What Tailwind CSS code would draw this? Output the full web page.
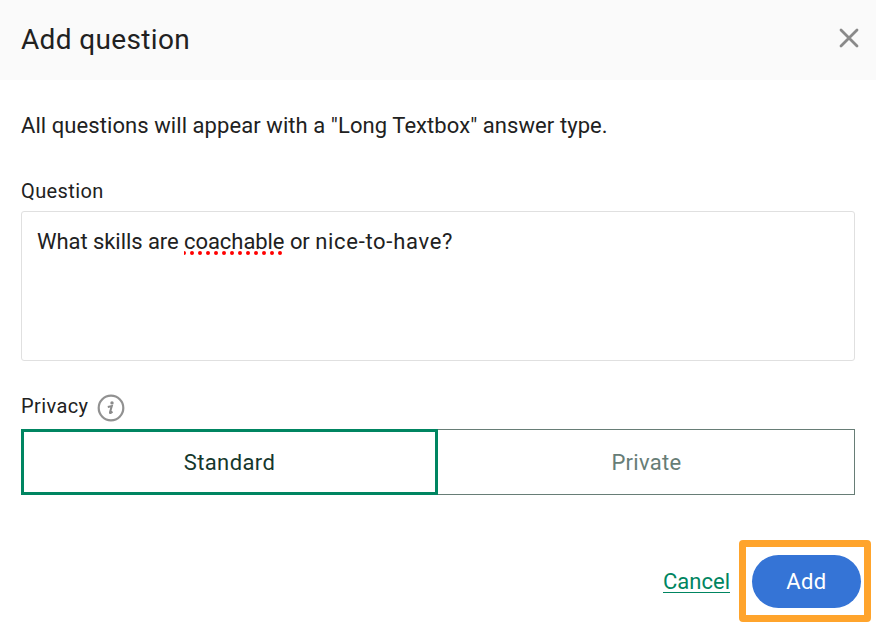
<!DOCTYPE html>
<html lang="en">
  <head>
    <meta charset="utf-8" />
    <meta name="viewport" content="width=device-width, initial-scale=1" />
    <title>Add question</title>
    <script src="https://cdn.jsdelivr.net/npm/@tailwindcss/browser@4"></script>
  </head>
  <body class="bg-white font-['Roboto','Liberation_Sans',sans-serif] text-[#212121]">
    <div class="flex h-[623px] w-[876px] flex-col overflow-hidden">
      <header class="flex h-20 shrink-0 items-center justify-between bg-[#fafafa] pr-[17px] pl-[21px]">
        <h1 class="text-[28px] leading-8 tracking-[0.35px]">Add question</h1>
        <button class="-mt-1" aria-label="Close">
          <svg class="size-5" viewBox="0 0 20 20" fill="none" stroke="#8a8a8a" stroke-width="2.8" stroke-linecap="round">
            <path d="M2 2l16 16M18 2L2 18" />
          </svg>
        </button>
      </header>

      <main class="flex flex-col px-[21px] pt-8">
        <p class="text-[22px] leading-7 tracking-[0.07px]">All questions will appear with a "Long Textbox" answer type.</p>

        <label class="mt-[39px] text-[20px] leading-6 tracking-[0.4px]">Question</label>
        <div class="mt-2 h-[150px] rounded-[3px] border border-[#e0e0e0] px-[15px] pt-4 text-[22px] leading-7 tracking-[-0.06px]">
          What skills are
          <span class="relative inline-block">coachable<svg class="absolute top-[23px] left-0 h-1 w-[99px]" viewBox="0 0 99 4" fill="none" stroke="#ff0000" stroke-width="4" stroke-linecap="round"><path d="M0 2H99" stroke-dasharray="0 8" /></svg></span>
          or <span class="tracking-[0.7px]">nice-to-have?</span>
        </div>

        <div class="mt-[33px] flex h-7 items-start gap-[9px]">
          <label class="text-[20px] leading-6 tracking-[0.4px]">Privacy</label>
          <svg class="size-7" viewBox="0 0 28 28">
            <circle cx="14" cy="14" r="12.3" fill="none" stroke="#919191" stroke-width="2.2" />
            <circle cx="15" cy="8.9" r="1.7" fill="#8a8a8a" />
            <path d="M10.8 13l4-.9-1.8 6.2q-.2 1 .5.7l2-1.4" fill="none" stroke="#8a8a8a" stroke-width="2" />
          </svg>
        </div>

        <div class="mt-[7px] flex h-[66px] text-[22px] tracking-[0.4px]">
          <button class="w-[417px] border-3 border-[#008561] text-[#15372c]">Standard</button>
          <button class="w-[417px] border border-l-0 border-[#677d76] pl-px tracking-[0.3px] text-[#677d76]">Private</button>
        </div>
      </main>

      <footer class="mt-[45px] flex items-center justify-end pr-[5px] text-[22px]">
        <a href="#" class="mt-0.5 mr-[9px] border-b border-[#008561] leading-[21px] text-[#008561]">Cancel</a>
        <div class="rounded-[4px] border-7 border-[#ffa42c] bg-white pt-2 pr-[3px] pb-[7px] pl-1.5">
          <button class="block h-[53px] w-[109px] rounded-full bg-[#3574d6] text-white tracking-[0.4px]">Add</button>
        </div>
      </footer>
    </div>
  </body>
</html>
